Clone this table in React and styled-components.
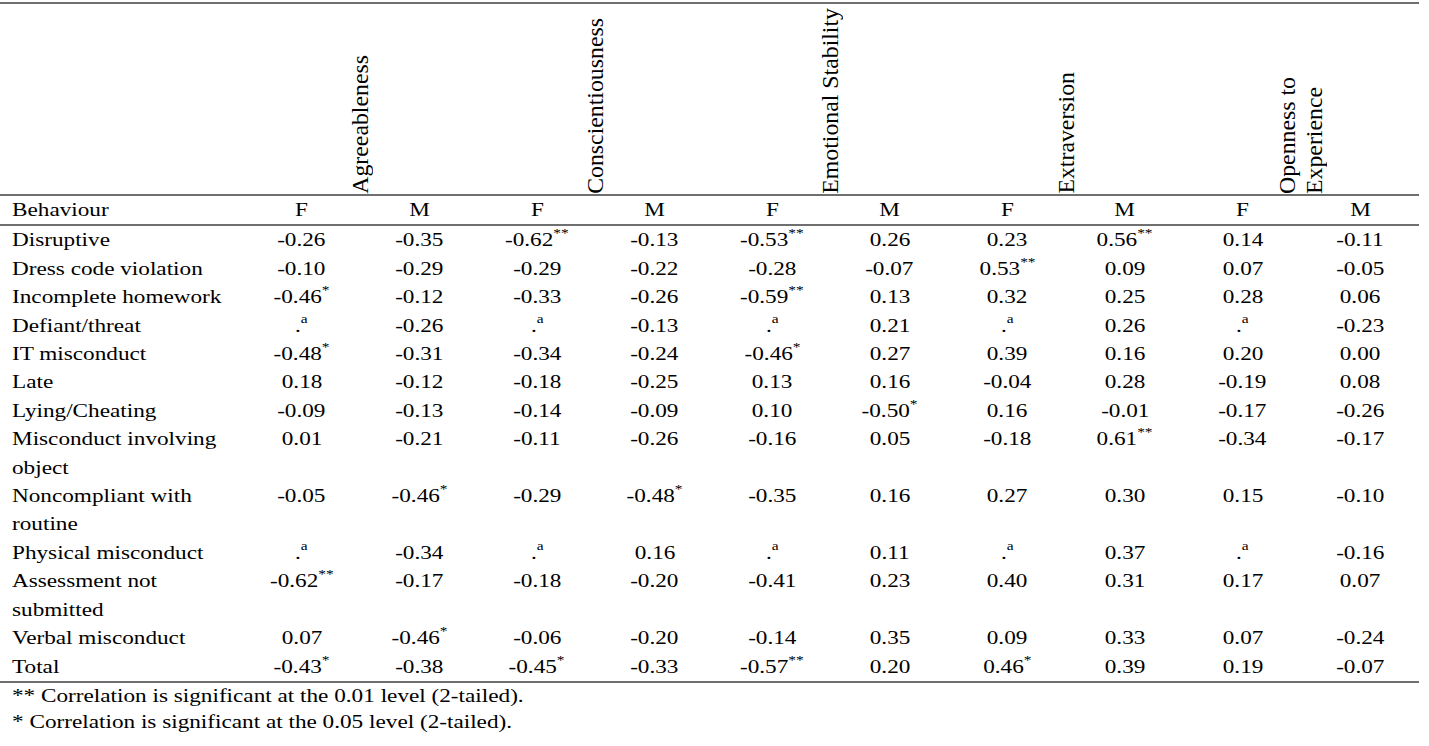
import styled, { createGlobalStyle } from 'styled-components';

const GlobalStyle = createGlobalStyle`
  body {
    margin: 0;
    background: #fff;
    color: #000;
    font-family: "Liberation Serif", "Times New Roman", serif;
    overflow: hidden;
  }
`;

const TRAITS = [
  ['Agreeableness'],
  ['Conscientiousness'],
  ['Emotional Stability'],
  ['Extraversion'],
  ['Openness to', 'Experience'],
];

const ROWS = [
  [['Disruptive'], ['-0.26', '-0.35', '-0.62**', '-0.13', '-0.53**', '0.26', '0.23', '0.56**', '0.14', '-0.11']],
  [['Dress code violation'], ['-0.10', '-0.29', '-0.29', '-0.22', '-0.28', '-0.07', '0.53**', '0.09', '0.07', '-0.05']],
  [['Incomplete homework'], ['-0.46*', '-0.12', '-0.33', '-0.26', '-0.59**', '0.13', '0.32', '0.25', '0.28', '0.06']],
  [['Defiant/threat'], ['.a', '-0.26', '.a', '-0.13', '.a', '0.21', '.a', '0.26', '.a', '-0.23']],
  [['IT misconduct'], ['-0.48*', '-0.31', '-0.34', '-0.24', '-0.46*', '0.27', '0.39', '0.16', '0.20', '0.00']],
  [['Late'], ['0.18', '-0.12', '-0.18', '-0.25', '0.13', '0.16', '-0.04', '0.28', '-0.19', '0.08']],
  [['Lying/Cheating'], ['-0.09', '-0.13', '-0.14', '-0.09', '0.10', '-0.50*', '0.16', '-0.01', '-0.17', '-0.26']],
  [['Misconduct involving', 'object'], ['0.01', '-0.21', '-0.11', '-0.26', '-0.16', '0.05', '-0.18', '0.61**', '-0.34', '-0.17']],
  [['Noncompliant with', 'routine'], ['-0.05', '-0.46*', '-0.29', '-0.48*', '-0.35', '0.16', '0.27', '0.30', '0.15', '-0.10']],
  [['Physical misconduct'], ['.a', '-0.34', '.a', '0.16', '.a', '0.11', '.a', '0.37', '.a', '-0.16']],
  [['Assessment not', 'submitted'], ['-0.62**', '-0.17', '-0.18', '-0.20', '-0.41', '0.23', '0.40', '0.31', '0.17', '0.07']],
  [['Verbal misconduct'], ['0.07', '-0.46*', '-0.06', '-0.20', '-0.14', '0.35', '0.09', '0.33', '0.07', '-0.24']],
  [['Total'], ['-0.43*', '-0.38', '-0.45*', '-0.33', '-0.57**', '0.20', '0.46*', '0.39', '0.19', '-0.07']],
];

const RULE = '2px solid #6f6f6f';

const Page = styled.div`
  width: 1419px;
  padding-top: 2px;
`;

const Table = styled.div`
  border-top: ${RULE};
  border-bottom: ${RULE};
`;

const Row = styled.div`
  display: grid;
  grid-template-columns: 243px repeat(10, 1fr);
  font-size: 19.5px;
  line-height: 28.4px;
  border-bottom: ${(p) => (p.$rule ? RULE : 'none')};
`;

const HeadRow = styled(Row)`
  height: 190px;
`;

const TraitCell = styled.div`
  grid-column: span 2;
  display: flex;
  justify-content: center;
  align-items: flex-end;
`;

const TraitName = styled.div`
  writing-mode: vertical-rl;
  transform: rotate(180deg);
  font-size: 23.8px;
  line-height: 27px;
  white-space: nowrap;
`;

const Cell = styled.div`
  text-align: ${(p) => (p.$left ? 'left' : 'center')};
  padding-left: ${(p) => (p.$left ? '12px' : '0')};
`;

// the reference text is drawn wider than plain Times, so stretch it sideways
const Txt = styled.span`
  display: inline-block;
  white-space: nowrap;
  transform: scaleX(1.19);
  transform-origin: ${(p) => (p.$left ? 'left' : 'center')};
`;

const Sup = styled.sup`
  font-size: 13px;
  line-height: 0;
  vertical-align: 9px;
`;

const Notes = styled.div`
  font-size: 19.5px;
  line-height: 26px;
  padding-left: 12px;
`;

const NoteLine = styled.div``;

function Value({ v }) {
  if (v === '.a') {
    return (
      <Txt>
        .<Sup>a</Sup>
      </Txt>
    );
  }
  const m = v.match(/^([^*]+)(\*+)?$/);
  return (
    <Txt>
      {m[1]}
      {m[2] && <Sup>{m[2]}</Sup>}
    </Txt>
  );
}

export default function App() {
  return (
    <>
      <GlobalStyle />
      <Page>
        <Table>
          <HeadRow $rule>
            <div />
            {TRAITS.map((t) => (
              <TraitCell key={t[0]}>
                <TraitName>
                  {t.map((line, i) => (
                    <span key={line}>
                      {i > 0 && <br />}
                      {line}
                    </span>
                  ))}
                </TraitName>
              </TraitCell>
            ))}
          </HeadRow>
          <Row $rule>
            <Cell $left>
              <Txt $left>Behaviour</Txt>
            </Cell>
            {['F', 'M', 'F', 'M', 'F', 'M', 'F', 'M', 'F', 'M'].map((s, i) => (
              <Cell key={i}>
                <Txt>{s}</Txt>
              </Cell>
            ))}
          </Row>
          {ROWS.map(([label, vals]) => (
            <Row key={label[0]}>
              <Cell $left>
                <Txt $left>
                  {label.map((l, i) => (
                    <span key={l}>
                      {i > 0 && <br />}
                      {l}
                    </span>
                  ))}
                </Txt>
              </Cell>
              {vals.map((v, i) => (
                <Cell key={i}>
                  <Value v={v} />
                </Cell>
              ))}
            </Row>
          ))}
        </Table>
        <Notes>
          <NoteLine>
            <Txt $left>** Correlation is significant at the 0.01 level (2-tailed).</Txt>
          </NoteLine>
          <NoteLine>
            <Txt $left>* Correlation is significant at the 0.05 level (2-tailed).</Txt>
          </NoteLine>
        </Notes>
      </Page>
    </>
  );
}
